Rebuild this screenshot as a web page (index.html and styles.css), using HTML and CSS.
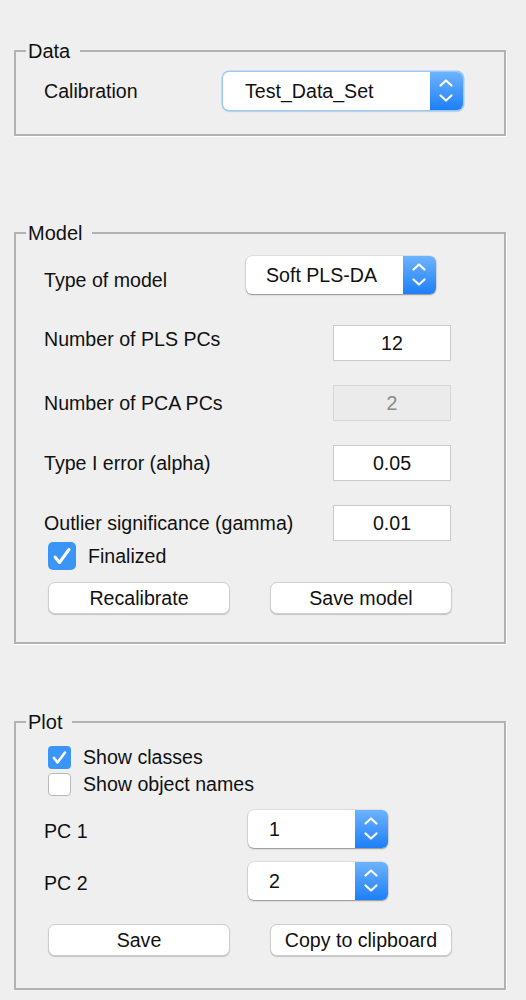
FILE: index.html
```html
<!DOCTYPE html>
<html>
<head>
<meta charset="utf-8">
<link rel="stylesheet" href="styles.css">
</head>
<body>
<fieldset class="panel panel-data">
  <legend>Data</legend>
  <div class="inner inner-data">
    <div class="row row-38">
      <span class="label w-data">Calibration</span>
      <div class="popup focus w-240">
        <span class="popup-text">Test_Data_Set</span>
        <span class="popup-arrows"><svg width="33" height="38" viewBox="0 0 33 38"><polyline points="10.5,13.5 16,8.5 21.5,13.5"/><polyline points="10.5,23.5 16,28.5 21.5,23.5"/></svg></span>
      </div>
    </div>
  </div>
</fieldset>

<fieldset class="panel panel-model">
  <legend>Model</legend>
  <div class="inner inner-model">
    <div class="row row-38 mt-12">
      <span class="label w-model lower">Type of model</span>
      <div class="popup w-190">
        <span class="popup-text pad-20">Soft PLS-DA</span>
        <span class="popup-arrows"><svg width="33" height="38" viewBox="0 0 33 38"><polyline points="10.5,13.5 16,8.5 21.5,13.5"/><polyline points="10.5,23.5 16,28.5 21.5,23.5"/></svg></span>
      </div>
    </div>
    <div class="row row-36 mt-31">
      <span class="label w-edit upper">Number of PLS PCs</span>
      <div class="edit">12</div>
    </div>
    <div class="row row-36 mt-24">
      <span class="label w-edit">Number of PCA PCs</span>
      <div class="edit disabled">2</div>
    </div>
    <div class="row row-36 mt-24">
      <span class="label w-edit">Type I error (alpha)</span>
      <div class="edit">0.05</div>
    </div>
    <div class="row row-36 mt-24">
      <span class="label w-edit">Outlier significance (gamma)</span>
      <div class="edit">0.01</div>
    </div>
    <div class="row row-28 mt-1 check-row">
      <span class="check big checked"><svg width="28" height="28" viewBox="0 0 28 28"><polyline points="7,15 11.5,20.5 21,7.5"/></svg></span>
      <span class="check-label">Finalized</span>
    </div>
    <div class="row btn-row mt-12">
      <div class="btn">Recalibrate</div>
      <div class="btn">Save model</div>
    </div>
  </div>
</fieldset>

<fieldset class="panel panel-plot">
  <legend>Plot</legend>
  <div class="inner inner-plot">
    <div class="row row-23 mt-13 check-row">
      <span class="check small checked"><svg width="23" height="23" viewBox="0 0 23 23"><polyline points="6,12 9.5,16.5 17,6.5"/></svg></span>
      <span class="check-label sm">Show classes</span>
    </div>
    <div class="row row-24 mt-3 check-row">
      <span class="check small"></span>
      <span class="check-label sm">Show object names</span>
    </div>
    <div class="row row-38 mt-14">
      <span class="label w-pc lower-s">PC 1</span>
      <div class="popup w-140">
        <span class="popup-text pad-21">1</span>
        <span class="popup-arrows"><svg width="33" height="38" viewBox="0 0 33 38"><polyline points="10.5,13.5 16,8.5 21.5,13.5"/><polyline points="10.5,23.5 16,28.5 21.5,23.5"/></svg></span>
      </div>
    </div>
    <div class="row row-38 mt-14">
      <span class="label w-pc lower-s">PC 2</span>
      <div class="popup w-140">
        <span class="popup-text pad-21">2</span>
        <span class="popup-arrows"><svg width="33" height="38" viewBox="0 0 33 38"><polyline points="10.5,13.5 16,8.5 21.5,13.5"/><polyline points="10.5,23.5 16,28.5 21.5,23.5"/></svg></span>
      </div>
    </div>
    <div class="row btn-row mt-24">
      <div class="btn">Save</div>
      <div class="btn">Copy to clipboard</div>
    </div>
  </div>
</fieldset>
</body>
</html>
```

FILE: styles.css
```css
html, body {
  margin: 0;
  padding: 0;
  background: #efefef;
}
body {
  font-family: "Liberation Sans", Arial, Helvetica, sans-serif;
  font-size: 19.6px;
  color: #111;
  padding-top: 40px;
}
.panel {
  box-sizing: border-box;
  width: 492px;
  margin: 0 0 0 14px;
  padding: 0;
  border: 2px solid #b2b2b2;
  box-shadow: 1px 1px 0 #ffffff;
  min-width: 0;
}
.panel legend {
  margin-left: 10px;
  padding: 0 10px 0 2px;
  font-size: 20px;
  line-height: 22px;
  height: 22px;
  color: #111;
}
.panel-model { margin-top: 86px; }
.panel-plot { margin-top: 67px; }

.inner { padding-left: 32px; }
.inner-data { padding-top: 10px; padding-bottom: 24px; }
.inner-model { padding-top: 0; padding-bottom: 28px; }
.inner-plot { padding-top: 0; padding-bottom: 32px; }

.row {
  display: flex;
  align-items: center;
}
.row-38 { height: 38px; }
.row-36 { height: 36px; }
.row-28 { height: 28px; }
.row-23 { height: 23px; }
.row-24 { height: 24px; }
.mt-1 { margin-top: 1px; }
.mt-3 { margin-top: 3px; }
.mt-12 { margin-top: 12px; }
.mt-13 { margin-top: 13px; }
.mt-14 { margin-top: 14px; }
.mt-24 { margin-top: 24px; }
.mt-31 { margin-top: 31px; }

.inner .row .label { margin-left: -4px; }
.label { white-space: nowrap; flex: none; }
.w-data { width: 179px; }
.w-model { width: 202px; }
.w-edit { width: 289px; }
.w-pc { width: 204px; }
.lower { margin-top: 11px; }
.lower-s { margin-top: 5px; }
.upper { margin-bottom: 7px; }

.popup {
  display: flex;
  align-items: center;
  height: 38px;
  box-sizing: border-box;
  background: #fff;
  border-radius: 6px;
  box-shadow: 0 1px 1.5px rgba(0,0,0,0.35), 0 0 0 0.5px rgba(0,0,0,0.12);
  overflow: hidden;
  flex: none;
}
.popup.focus {
  box-shadow: 0 0 0 1.5px #9ec9f6, 0 1px 2px rgba(0,0,0,0.3);
}
.w-240 { width: 240px; }
.w-190 { width: 190px; }
.w-140 { width: 140px; }
.popup-text {
  flex: 1;
  padding-left: 22px;
  white-space: nowrap;
}
.pad-20 { padding-left: 20px; }
.pad-21 { padding-left: 21px; }
.popup-arrows {
  width: 33px;
  height: 38px;
  flex: none;
  background: linear-gradient(#6db3ff, #1d7ff8);
  display: flex;
}
.popup-arrows svg polyline {
  fill: none;
  stroke: #fff;
  stroke-width: 2.2;
  stroke-linecap: round;
  stroke-linejoin: round;
}

.edit {
  box-sizing: border-box;
  width: 118px;
  height: 36px;
  background: #fff;
  border: 1px solid #c9c9c9;
  display: flex;
  align-items: center;
  justify-content: center;
  flex: none;
}
.edit.disabled {
  background: #ebebeb;
  border-color: #d6d6d6;
  color: #8a8a8a;
}

.check-row { padding-left: 0; }
.check {
  box-sizing: border-box;
  flex: none;
  display: flex;
  background: #fff;
  border: 1px solid #b9b9b9;
}
.check.big {
  width: 28px;
  height: 28px;
  border-radius: 5px;
}
.check.small {
  width: 23px;
  height: 23px;
  border-radius: 4px;
}
.check.checked {
  background: #3b95f7;
  border: none;
}
.check svg polyline {
  fill: none;
  stroke: #fff;
  stroke-width: 3;
  stroke-linecap: round;
  stroke-linejoin: round;
}
.check.small svg polyline { stroke-width: 2.6; }
.check-label { margin-left: 12px; white-space: nowrap; }
.check-label.sm { margin-left: 12px; }

.btn-row { gap: 40px; }
.btn {
  box-sizing: border-box;
  width: 182px;
  height: 32px;
  background: #fff;
  border: 1px solid #cdcdcd;
  border-radius: 7px;
  box-shadow: 0 1px 1px rgba(0,0,0,0.18);
  display: flex;
  align-items: center;
  justify-content: center;
  white-space: nowrap;
  flex: none;
}
```
